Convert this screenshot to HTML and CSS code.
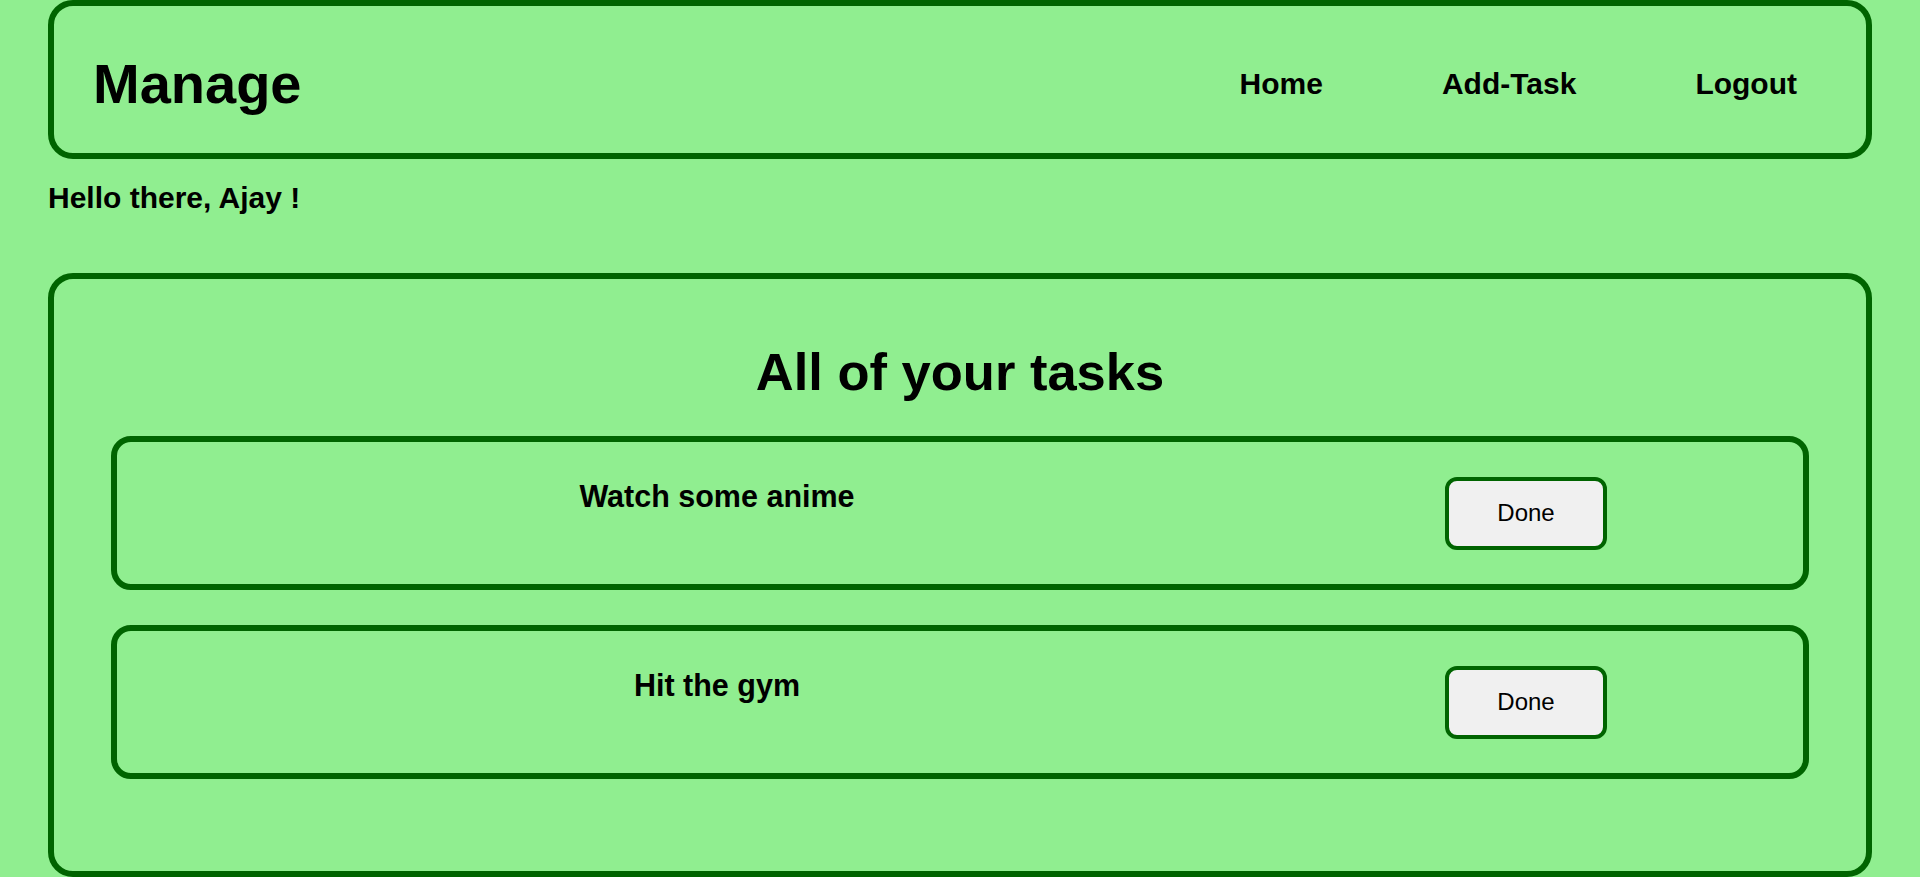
FILE: index.html
```html
<!DOCTYPE html>
<html lang="en">
<head>
<meta charset="utf-8">
<title>Manage</title>
<link rel="stylesheet" href="styles.css">
</head>
<body>
  <header class="navbar">
    <h1 class="brand">Manage</h1>
    <nav class="nav-links">
      <a href="#" class="nav-link">Home</a>
      <a href="#" class="nav-link">Add-Task</a>
      <a href="#" class="nav-link">Logout</a>
    </nav>
  </header>
  <p class="greeting">Hello there, Ajay !</p>
  <main class="tasks-panel">
    <h2 class="tasks-title">All of your tasks</h2>
    <div class="task-list">
      <div class="task-card">
        <div class="task-name">Watch some anime</div>
        <button class="done-btn" type="button">Done</button>
      </div>
      <div class="task-card">
        <div class="task-name">Hit the gym</div>
        <button class="done-btn" type="button">Done</button>
      </div>
    </div>
  </main>
</body>
</html>
```
FILE: styles.css
```css
* {
  box-sizing: border-box;
}

html, body {
  margin: 0;
  padding: 0;
}

body {
  background: #90ee90;
  color: #000;
  font-family: "Liberation Sans", Arial, sans-serif;
  font-weight: bold;
}

.navbar {
  width: 95%;
  margin: 0 auto;
  height: 159px;
  border: 6px solid #006400;
  border-radius: 25px;
  display: flex;
  align-items: center;
  justify-content: space-between;
  padding: 8px 69px 0 39px;
}

.brand {
  margin: 0;
  font-size: 56px;
  line-height: 62px;
  font-weight: bold;
}

.nav-links {
  display: flex;
  gap: 119px;
}

.nav-link {
  color: #000;
  text-decoration: none;
  font-size: 30px;
  line-height: 34px;
}

.greeting {
  width: 95%;
  margin: 22px auto 0;
  font-size: 30px;
  line-height: 34px;
}

.tasks-panel {
  display: block;
  width: 95%;
  margin: 58px auto 0;
  height: 604px;
  border: 6px solid #006400;
  border-radius: 25px;
  padding: 63px 57px 0;
}

.tasks-title {
  margin: 0;
  text-align: center;
  font-size: 52.5px;
  line-height: 60px;
}

.task-list {
  margin-top: 34px;
  display: flex;
  flex-direction: column;
  gap: 35px;
}

.task-card {
  height: 154px;
  border: 6px solid #006400;
  border-radius: 20px;
  display: flex;
  align-items: center;
}

.task-name {
  flex: 0 0 1200px;
  align-self: flex-start;
  padding-top: 37px;
  text-align: center;
  font-size: 30.5px;
  line-height: 34px;
}

.done-btn {
  margin-left: 128px;
  width: 162px;
  height: 73px;
  border: 4px solid #006400;
  border-radius: 12px;
  background: #f0f0f0;
  color: #000;
  font-family: "Liberation Sans", Arial, sans-serif;
  font-weight: normal;
  font-size: 24px;
  padding: 0;
}
```
